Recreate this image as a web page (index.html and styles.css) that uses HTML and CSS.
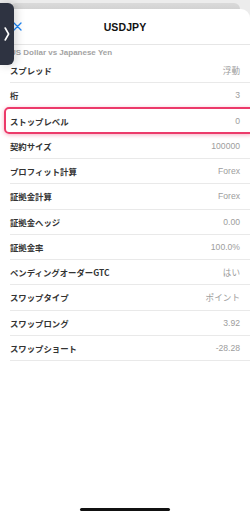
FILE: index.html
```html
<!DOCTYPE html>
<html lang="ja">
<head>
<meta charset="utf-8">
<link rel="stylesheet" href="styles.css">
</head>
<body>
<div class="screen">
  <div class="stage"><div class="behind"></div></div>
  <div class="tab">
    <svg width="6" height="14" viewBox="0 0 6 14"><path d="M1.2 1 L4.6 7 L1.2 13" fill="none" stroke="#fff" stroke-width="1.6" stroke-linecap="round" stroke-linejoin="round"/></svg>
  </div>
  <div class="sheet">
    <header class="head">
      <span class="close">
        <svg width="9" height="9" viewBox="0 0 9 9"><path d="M1 1 L8 8 M8 1 L1 8" stroke="#1a84f5" stroke-width="1.3" stroke-linecap="round"/></svg>
      </span>
      <span class="title">USDJPY</span>
      <span></span>
    </header>
    <div class="sub">US Dollar vs Japanese Yen</div>
    <ul class="list">
      <li class="row"><span class="lab">スプレッド</span><span class="val">浮動</span></li>
      <li class="row"><span class="lab">桁</span><span class="val">3</span></li>
      <li class="row hl"><span class="lab">ストップレベル</span><span class="val">0</span></li>
      <li class="row"><span class="lab">契約サイズ</span><span class="val">100000</span></li>
      <li class="row"><span class="lab">プロフィット計算</span><span class="val">Forex</span></li>
      <li class="row"><span class="lab">証拠金計算</span><span class="val">Forex</span></li>
      <li class="row"><span class="lab">証拠金ヘッジ</span><span class="val">0.00</span></li>
      <li class="row"><span class="lab">証拠金率</span><span class="val">100.0%</span></li>
      <li class="row"><span class="lab">ペンディングオーダーGTC</span><span class="val">はい</span></li>
      <li class="row"><span class="lab">スワップタイプ</span><span class="val">ポイント</span></li>
      <li class="row"><span class="lab">スワップロング</span><span class="val">3.92</span></li>
      <li class="row"><span class="lab">スワップショート</span><span class="val">-28.28</span></li>
    </ul>
    <div class="home"></div>
  </div>
</div>
</body>
</html>
```
FILE: styles.css
```css
* { box-sizing: border-box; }
html, body { margin: 0; padding: 0; }
body {
  width: 250px;
  height: 515px;
  overflow: hidden;
  background: #fff;
  font-family: "Liberation Sans", "Noto Sans CJK JP", sans-serif;
}
.screen {
  position: relative;
  width: 250px;
  height: 515px;
  display: flex;
  flex-direction: column;
  background: #ececec;
}
.stage {
  padding-top: 3px;
  flex: none;
}
.behind {
  margin: 0 10px 0 10px;
  height: 6px;
  background: linear-gradient(#dadada, #d2d2d2);
  border-radius: 7px 7px 0 0;
}
.tab {
  position: absolute;
  left: 0;
  top: 3px;
  width: 13.5px;
  height: 62px;
  background: #2e3341;
  border-radius: 0 6px 6px 0;
  box-shadow: 2px 0 10px rgba(0,0,0,0.18);
  display: flex;
  align-items: center;
  justify-content: center;
  z-index: 2;
}
.sheet {
  flex: 1;
  background: #fff;
  border-radius: 9px 9px 0 0;
  display: flex;
  flex-direction: column;
}
.head {
  height: 36px;
  flex: none;
  display: grid;
  grid-template-columns: 1fr auto 1fr;
  align-items: center;
  border-bottom: 1px solid #e6e6e6;
}
.close {
  padding-left: 13px;
  display: flex;
  align-items: center;
}
.title {
  font-size: 10.5px;
  font-weight: bold;
  color: #111;
  letter-spacing: 0.1px;
}
.sub {
  flex: none;
  height: 13px;
  padding-left: 10px;
  padding-top: 1px;
  font-size: 8px;
  font-weight: bold;
  color: #a3a3a3;
  line-height: 13px;
}
.list {
  list-style: none;
  margin: 0;
  padding: 0;
  flex: none;
}
.row {
  position: relative;
  height: 25.25px;
  margin-left: 10px;
  padding-right: 10px;
  border-bottom: 1px solid #e9e9e9;
  display: flex;
  align-items: center;
  justify-content: space-between;
}
.lab {
  font-family: "Noto Sans CJK JP", sans-serif;
  font-size: 8.4px;
  font-weight: 700;
  color: #333;
}
.val {
  font-family: "Liberation Sans", "Noto Sans CJK JP", sans-serif;
  font-size: 8.6px;
  color: #9d9d9d;
}
.hl::after {
  content: "";
  position: absolute;
  left: -6px;
  right: -4px;
  top: -1.5px;
  bottom: -1.5px;
  border: 2.2px solid #ec3a6a;
  border-radius: 5px;
  box-shadow: 0 1px 4px rgba(236,58,106,0.4);
}
.home {
  margin-top: auto;
  margin-bottom: 4px;
  align-self: center;
  width: 90px;
  height: 3px;
  border-radius: 2px;
  background: #111;
}
```
